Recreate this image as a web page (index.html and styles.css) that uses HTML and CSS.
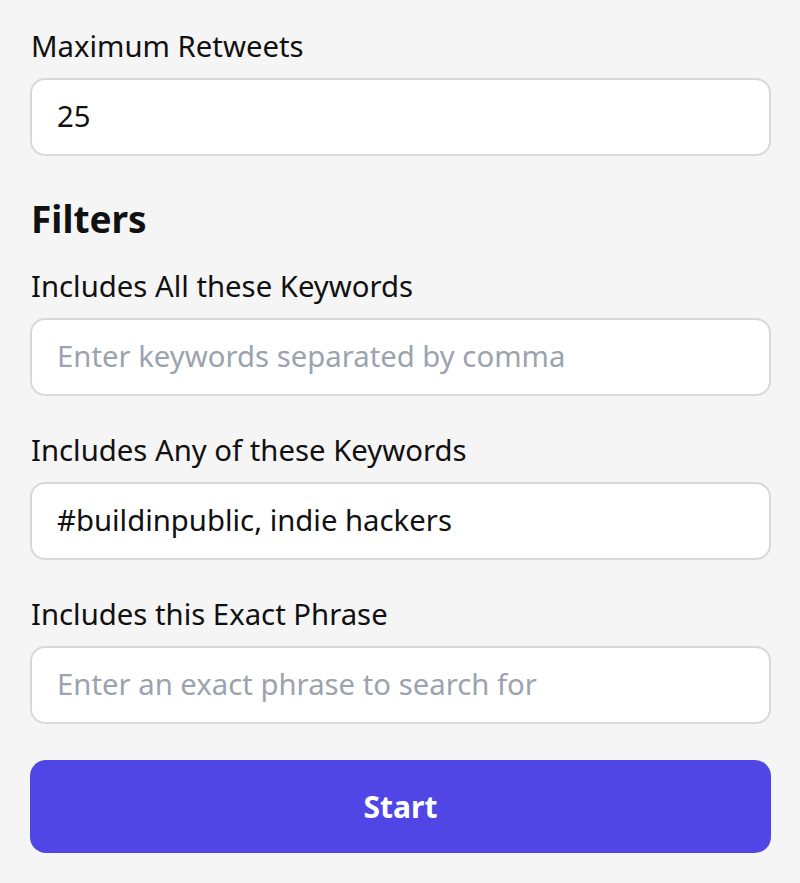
FILE: index.html
```html
<!DOCTYPE html>
<html>
<head>
<meta charset="utf-8">
<link rel="stylesheet" href="styles.css">
</head>
<body>
<main class="form">
  <div class="field first">
    <label class="label">Maximum Retweets</label>
    <input class="input" type="text" value="25">
  </div>
  <h2 class="heading">Filters</h2>
  <div class="field">
    <label class="label">Includes All these Keywords</label>
    <input class="input" type="text" placeholder="Enter keywords separated by comma">
  </div>
  <div class="field">
    <label class="label">Includes Any of these Keywords</label>
    <input class="input" type="text" value="#buildinpublic, indie hackers">
  </div>
  <div class="field">
    <label class="label">Includes this Exact Phrase</label>
    <input class="input" type="text" placeholder="Enter an exact phrase to search for">
  </div>
  <button class="button" type="button">Start</button>
</main>
</body>
</html>
```

FILE: styles.css
```css
html, body {
  margin: 0;
  padding: 0;
  background: #f5f5f5;
}
body {
  font-family: "Noto Sans", sans-serif;
  color: #111;
}
.form {
  width: 741px;
  margin-left: 30px;
  padding-top: 26px;
  display: flex;
  flex-direction: column;
}
.field {
  display: flex;
  flex-direction: column;
  gap: 12px;
  margin-bottom: 34px;
}
.label {
  padding-left: 1px;
  font-size: 29.3px;
  line-height: 40px;
}
.input {
  box-sizing: border-box;
  height: 78px;
  width: 100%;
  padding: 0 25px 2px;
  border: 2px solid #d8d8db;
  border-radius: 15px;
  background: #fff;
  font-family: "Noto Sans", sans-serif;
  font-size: 29.3px;
  color: #111;
  outline: none;
}
.input::placeholder {
  color: #9ca3af;
}
.heading {
  margin: 5px 0 23px;
  padding-left: 1px;
  font-size: 37px;
  line-height: 48px;
  font-weight: 700;
}
.button {
  margin-top: 2px;
  height: 93px;
  border: none;
  border-radius: 16px;
  background: #4f46e5;
  color: #fff;
  font-family: "Noto Sans", sans-serif;
  font-size: 30px;
  font-weight: 700;
}
```
